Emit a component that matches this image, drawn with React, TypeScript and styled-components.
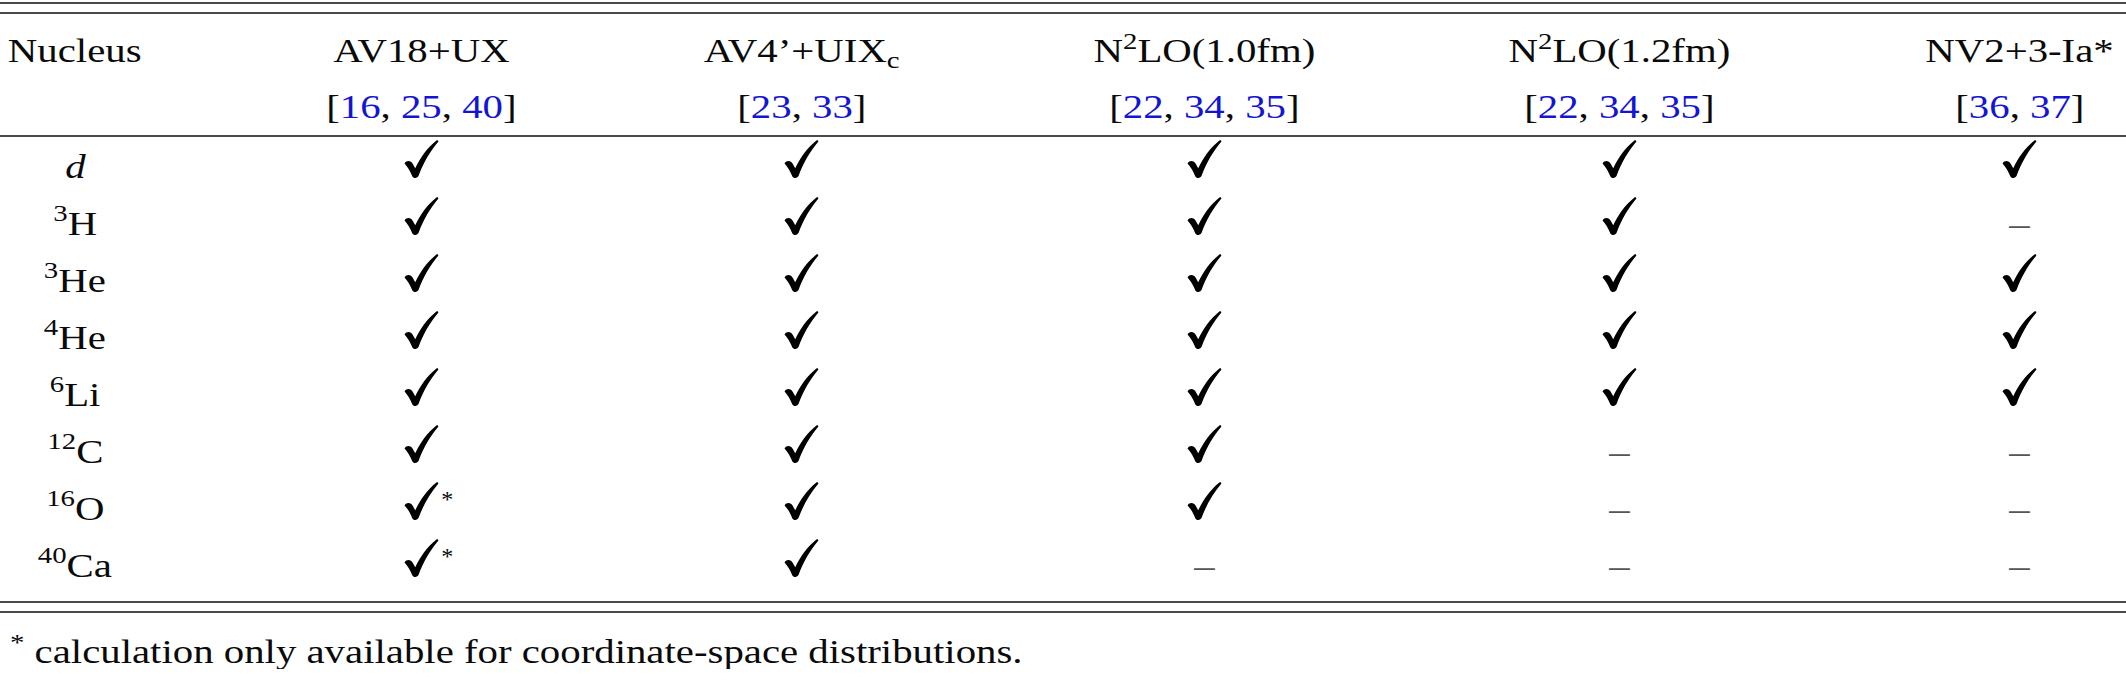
import React from "react";
import styled, { createGlobalStyle } from "styled-components";

// the source picture is wider than tall, so every piece of text gets stretched sideways
const STRETCH = 1.2;

type Mark = "y" | "s" | "n";

type Nucleus = {
    iso?: string
    el: string
    marks: Mark[]
}

const nuclei: Nucleus[] = [
    {el: "d", marks: ["y", "y", "y", "y", "y"]},
    {iso: "3", el: "H", marks: ["y", "y", "y", "y", "n"]},
    {iso: "3", el: "He", marks: ["y", "y", "y", "y", "y"]},
    {iso: "4", el: "He", marks: ["y", "y", "y", "y", "y"]},
    {iso: "6", el: "Li", marks: ["y", "y", "y", "y", "y"]},
    {iso: "12", el: "C", marks: ["y", "y", "y", "n", "n"]},
    {iso: "16", el: "O", marks: ["s", "y", "y", "n", "n"]},
    {iso: "40", el: "Ca", marks: ["s", "y", "n", "n", "n"]},
]

const refs: number[][] = [
    [16, 25, 40],
    [23, 33],
    [22, 34, 35],
    [22, 34, 35],
    [36, 37],
]

const CheckIcon = () => (
    <svg width="35" height="38" viewBox="0 0 33 37">
        <path
            fill="#000"
            d="M0 22.8C2 19.6 6.2 19.8 8.2 23.6L10.4 27.6C15 17.4 22 7.6 31 0.4C32.3 -0.4 33.4 1 32.6 2C25.2 10.6 18.2 22.4 13.8 34.6C12.6 37.6 8.6 37.8 7.4 35C5.6 30.6 3.4 26.4 0 22.8Z"
        />
    </svg>
)

const MarkCell = ({mark}: { mark: Mark }) => {
    if (mark === "n") {
        return (
            <Cell>
                <Wide><Dash>–</Dash></Wide>
            </Cell>
        )
    }
    return (
        <Cell>
            <CheckWrap>
                <CheckIcon/>
                {mark === "s" && <CheckStar>*</CheckStar>}
            </CheckWrap>
        </Cell>
    )
}

const RefList = ({items}: { items: number[] }) => (
    <Wide>
        [
        {items.map((r, i) => (
            <React.Fragment key={i}>
                <Ref>{r}</Ref>
                {i < items.length - 1 ? ", " : ""}
            </React.Fragment>
        ))}
        ]
    </Wide>
)

export default function App() {
    return (
        <Page>
            <GlobalStyle/>
            <DoubleRule/>
            <Row $h={73}>
                <Cell><Wide>Nucleus</Wide></Cell>
                <Cell><Wide>AV18+UX</Wide></Cell>
                <Cell><Wide>AV4’+UIX<Sub>c</Sub></Wide></Cell>
                <Cell><Wide>N<Sup $rise={13}>2</Sup>LO(1.0fm)</Wide></Cell>
                <Cell><Wide>N<Sup $rise={13}>2</Sup>LO(1.2fm)</Wide></Cell>
                <Cell><Wide>NV2+3-Ia*</Wide></Cell>
            </Row>
            <Row $h={39}>
                <Cell/>
                {refs.map((r, i) => (
                    <Cell key={i}><RefList items={r}/></Cell>
                ))}
            </Row>
            <Rule $top={9}/>
            <Body>
                {nuclei.map((n) => (
                    <Row $h={57} key={(n.iso ?? "") + n.el}>
                        <Cell>
                            <Wide>
                                {n.iso ? <Sup $rise={14}>{n.iso}</Sup> : null}
                                {n.iso ? n.el : <i>{n.el}</i>}
                            </Wide>
                        </Cell>
                        {n.marks.map((m, i) => (
                            <MarkCell mark={m} key={i}/>
                        ))}
                    </Row>
                ))}
            </Body>
            <DoubleRule $top={7}/>
            <Footnote>
                <Wide $origin="left">
                    <Sup $rise={13}>*</Sup> calculation only available for coordinate-space distributions.
                </Wide>
            </Footnote>
        </Page>
    )
}

const GlobalStyle = createGlobalStyle`
  html, body {
    margin: 0;
    padding: 0;
    background: #fff;
  }

  body {
    font-family: "Liberation Serif", "Times New Roman", serif;
    color: #0a0a0a;
  }
`

const Page = styled.div`
  width: 2126px;
  padding-top: 2px;
`

const DoubleRule = styled.div<{ $top?: number }>`
  height: 8px;
  margin-top: ${p => p.$top ?? 0}px;
  border-top: 2px solid #4a4a4a;
  border-bottom: 2px solid #4a4a4a;
`

const Rule = styled.div<{ $top: number }>`
  height: 2px;
  margin-top: ${p => p.$top}px;
  background: #4a4a4a;
`

const Body = styled.div`
  padding-top: 1px;
`

const Row = styled.div<{ $h: number }>`
  display: grid;
  grid-template-columns: 132px 176px 198px 222px 222px 194px;
  justify-content: space-between;
  padding: 0 9px;
  height: ${p => p.$h}px;
  line-height: ${p => p.$h}px;
  font-size: 34px;
  white-space: nowrap;
`

const Cell = styled.div`
  text-align: center;
`

const Wide = styled.span<{ $origin?: string }>`
  display: inline-block;
  transform: scaleX(${STRETCH});
  transform-origin: ${p => p.$origin ?? "center"};
`

const Sup = styled.span<{ $rise: number }>`
  position: relative;
  top: -${p => p.$rise}px;
  font-size: 24px;
  line-height: 0;
`

const Sub = styled.span`
  position: relative;
  top: 6px;
  font-size: 24px;
  line-height: 0;
`

const Ref = styled.span`
  color: #1414d4;
`

const Dash = styled.span`
  color: #555;
`

const CheckWrap = styled.span`
  display: inline-block;
  position: relative;
  line-height: 0;

  svg {
    vertical-align: baseline;
  }
`

const CheckStar = styled.span`
  position: absolute;
  left: calc(100% + 2px);
  top: 6px;
  font-size: 24px;
  line-height: 22px;
`

const Footnote = styled.p`
  margin: 22px 0 0;
  padding-left: 10px;
  font-size: 34px;
  line-height: 34px;
  white-space: nowrap;
`
